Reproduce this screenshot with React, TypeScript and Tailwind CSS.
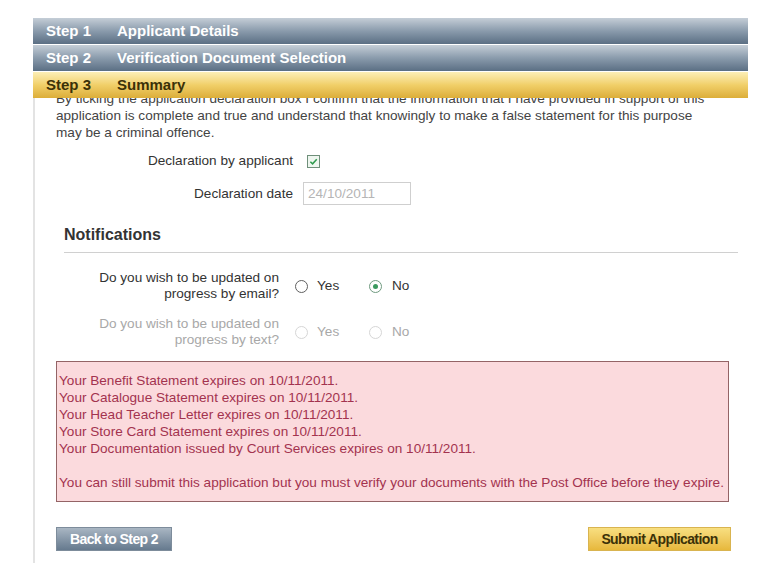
import React from "react";

const steps = [
  { n: "Step 1", title: "Applicant Details", active: false },
  { n: "Step 2", title: "Verification Document Selection", active: false },
  { n: "Step 3", title: "Summary", active: true },
];

const expiries = [
  "Your Benefit Statement expires on 10/11/2011.",
  "Your Catalogue Statement expires on 10/11/2011.",
  "Your Head Teacher Letter expires on 10/11/2011.",
  "Your Store Card Statement expires on 10/11/2011.",
  "Your Documentation issued by Court Services expires on 10/11/2011.",
];

const Radio: React.FC<{ checked?: boolean; disabled?: boolean }> = ({ checked, disabled }) => (
  <span
    className={`flex h-[13px] w-[13px] items-center justify-center rounded-full border bg-white ${
      disabled ? "border-[#d6d6d6]" : checked ? "border-[#6f9a7f]" : "border-[#5f5f5f]"
    }`}
  >
    {checked && <span className="h-[5px] w-[5px] rounded-full bg-[#3c9a5f]" />}
  </span>
);

const RadioRow: React.FC<{ lines: [string, string]; value?: "yes" | "no"; disabled?: boolean }> = ({
  lines,
  value,
  disabled,
}) => (
  <div className={`flex items-center ${disabled ? "text-[#a8a8a8]" : "text-[#333]"}`}>
    <div className="w-[244px] text-right leading-[16px]">
      {lines[0]}
      <br />
      {lines[1]}
    </div>
    <div className="ml-[16px] flex items-center gap-[9px]">
      <Radio checked={value === "yes"} disabled={disabled} />
      <span className="w-[43px]">Yes</span>
    </div>
    <div className="ml-[9px] flex items-center gap-[10px]">
      <Radio checked={value === "no"} disabled={disabled} />
      <span>No</span>
    </div>
  </div>
);

const App: React.FC = () => {
  return (
    <div className="h-[587px] w-[775px] overflow-hidden bg-white font-['Liberation_Sans',Arial,sans-serif] text-[13.6px]">
      <div className="ml-[33px] w-[715px] pt-[18px]">
        {steps.map((s, i) => (
          <div
            key={s.n}
            className={`flex h-[26px] items-center pl-[13px] text-[15px] font-bold ${
              i > 0 ? "mt-[1px]" : ""
            } ${
              s.active
                ? "bg-gradient-to-b from-[#fcefb6] via-[#f1cf68] to-[#dcae38] text-[#3b3108]"
                : "bg-gradient-to-b from-[#c5ced7] via-[#8a9bac] to-[#5b6f84] text-white"
            }`}
          >
            <span className="w-[71px]">{s.n}</span>
            <span>{s.title}</span>
          </div>
        ))}

        <div className="h-[465px] overflow-hidden border-l-2 border-[#e3e3e3] text-[#444]">
          <p className="-mt-[8px] w-[675px] pl-[21px] leading-[17px]">
            By ticking the application declaration box I confirm that the information that I have provided in support of this
            application is complete and true and understand that knowingly to make a false statement for this purpose may be
            a criminal offence.
          </p>

          <div className="mt-[10px] flex items-center text-[#333]">
            <span className="w-[258px] text-right">Declaration by applicant</span>
            <span className="ml-[14px] flex h-[13px] w-[13px] items-center justify-center border border-[#6f8f7a] bg-[#eef6ef]">
              <svg viewBox="0 0 10 10" className="h-[9px] w-[9px]">
                <path d="M1.5 5.2 L4 7.6 L8.6 2.4" fill="none" stroke="#2f9a4e" strokeWidth="1.7" />
              </svg>
            </span>
          </div>

          <div className="mt-[11px] flex items-center text-[#333]">
            <span className="w-[258px] text-right">Declaration date</span>
            <span className="ml-[10px] flex h-[23px] w-[108px] items-center border border-[#cfcfcf] pl-[4px] text-[#b5b5b5]">
              24/10/2011
            </span>
          </div>

          <div className="ml-[29px] mr-[10px] mt-[18px] border-b border-[#d0d0d0] pb-[5px] text-[16px] font-bold text-[#333]">
            Notifications
          </div>

          <div className="mt-[17px]">
            <RadioRow lines={["Do you wish to be updated on", "progress by email?"]} value="no" />
          </div>
          <div className="mt-[14px]">
            <RadioRow lines={["Do you wish to be updated on", "progress by text?"]} disabled />
          </div>

          <div className="ml-[21px] mt-[13px] h-[141px] w-[673px] border border-[#946466] bg-[#fbdadd] pl-[2px] pt-[10px] leading-[17px] text-[#a3334f]">
            {expiries.map((e) => (
              <div key={e}>{e}</div>
            ))}
            <div className="mt-[17px] whitespace-nowrap">
              You can still submit this application but you must verify your documents with the Post Office before they expire.
            </div>
          </div>

          <div className="ml-[21px] mt-[25px] flex w-[674px] justify-between text-[14px] font-bold tracking-[-0.6px]">
            <button className="h-[24px] w-[116px] border border-[#7d8c9b] bg-gradient-to-b from-[#a9b6c3] to-[#667a8e] text-white">
              Back to Step 2
            </button>
            <button className="mr-[-1px] h-[24px] w-[143px] border border-[#d9b450] bg-gradient-to-b from-[#f8df80] to-[#e7b83b] text-[#3b3108]">
              Submit Application
            </button>
          </div>
        </div>
      </div>
    </div>
  );
};

export default App;
